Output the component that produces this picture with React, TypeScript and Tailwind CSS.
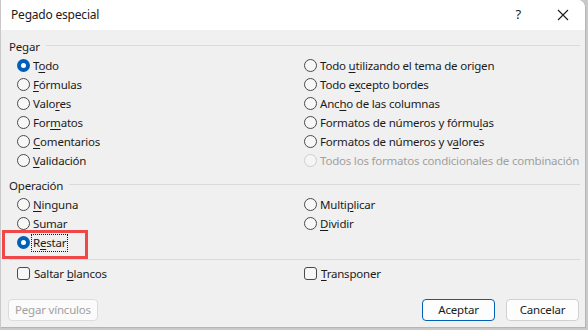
import React from "react"

type Opt = { pre: string; key: string; post: string; checked?: boolean; disabled?: boolean }

function Label({ o }: { o: Opt }) {
  return (
    <span className={o.disabled ? "text-[#a0a0a0]" : "text-[#1b1b1b]"}>
      {o.pre}
      {o.key && <span className="underline underline-offset-[2px]">{o.key}</span>}
      {o.post}
    </span>
  )
}

function Radio({ o, focus }: { o: Opt; focus?: boolean }) {
  return (
    <div className="flex h-[19px] items-center whitespace-nowrap">
      {o.checked ? (
        <span className="ml-[16px] flex h-[13px] w-[13px] shrink-0 items-center justify-center rounded-full bg-[#005fb8]">
          <span className="h-[5px] w-[5px] rounded-full bg-white" />
        </span>
      ) : (
        <span
          className={
            "ml-[16px] h-[13px] w-[13px] shrink-0 rounded-full border " +
            (o.disabled ? "border-[#cfcfcf] bg-[#f5f5f5]" : "border-[#4a4a4a] bg-[#f7f7f7]")
          }
        />
      )}
      <span
        className={
          "ml-[2px] px-[1px] leading-[16px] " +
          (focus ? "outline outline-1 outline-dotted outline-[#1b1b1b]" : "")
        }
      >
        <Label o={o} />
      </span>
    </div>
  )
}

function Check({ o }: { o: Opt }) {
  return (
    <div className="flex h-[19px] items-center whitespace-nowrap">
      <span className="ml-[16px] h-[13px] w-[13px] rounded-[3px] border border-[#4a4a4a] bg-[#f7f7f7]" />
      <span className="ml-[4px]">
        <Label o={o} />
      </span>
    </div>
  )
}

function GroupHeader({ title }: { title: string }) {
  return (
    <div className="flex h-[19px] items-center pr-[5px]">
      <span className="pl-[8px] text-[#1b1b1b]">{title}</span>
      <span className="ml-[6px] mt-[-3px] h-px flex-1 bg-[#dadada]" />
    </div>
  )
}

const pegarLeft: Opt[] = [
  { pre: "T", key: "o", post: "do", checked: true },
  { pre: "", key: "F", post: "órmulas" },
  { pre: "Valo", key: "r", post: "es" },
  { pre: "For", key: "m", post: "atos" },
  { pre: "", key: "C", post: "omentarios" },
  { pre: "", key: "V", post: "alidación" },
]

const pegarRight: Opt[] = [
  { pre: "Todo ", key: "u", post: "tilizando el tema de origen" },
  { pre: "Todo e", key: "x", post: "cepto bordes" },
  { pre: "Anc", key: "h", post: "o de las columnas" },
  { pre: "Formatos de números y fórmu", key: "l", post: "as" },
  { pre: "Formatos de números y v", key: "a", post: "lores" },
  { pre: "Todos los formatos condicionales de combinación", key: "", post: "", disabled: true },
]

export default function App() {
  return (
    <div
      className="h-[330px] w-[588px] bg-[#c9c9c9] text-[11.5px] tracking-[-0.2px]"
      style={{ fontFamily: '"Noto Sans", "Open Sans", sans-serif' }}
    >
      <div className="relative ml-[1px] h-[328px] w-[585px] overflow-hidden rounded-tr-[8px] border-r border-b border-[#b5b5b5] bg-[#f0f0f0]">
        <div className="flex h-[30px] items-center bg-white pl-[10px] pr-[14px]">
          <span className="text-[12px] text-[#1b1b1b]">Pegado especial</span>
          <span className="ml-auto mr-[36px] text-[13px] text-[#1b1b1b]">?</span>
          <svg width="12" height="12" viewBox="0 0 12 12" className="mr-[2px]">
            <path d="M1 1 L11 11 M11 1 L1 11" stroke="#1b1b1b" strokeWidth="1.1" />
          </svg>
        </div>

        <div className="mt-[7px]">
          <GroupHeader title="Pegar" />
          <div className="grid grid-cols-[287px_1fr]">
            <div>
              {pegarLeft.map((o) => (
                <Radio key={o.pre + o.key + o.post} o={o} />
              ))}
            </div>
            <div>
              {pegarRight.map((o) => (
                <Radio key={o.pre + o.key + o.post} o={o} />
              ))}
            </div>
          </div>

          <div className="mt-[6px]">
            <GroupHeader title="Operación" />
          </div>
          <div className="grid grid-cols-[287px_1fr]">
            <div>
              <Radio o={{ pre: "", key: "N", post: "inguna" }} />
              <Radio o={{ pre: "", key: "S", post: "umar" }} />
              <Radio o={{ pre: "R", key: "e", post: "star", checked: true }} focus />
            </div>
            <div>
              <Radio o={{ pre: "Multi", key: "p", post: "licar" }} />
              <Radio o={{ pre: "", key: "D", post: "ividir" }} />
            </div>
          </div>

          <div className="ml-[8px] mr-[5px] mt-[7px] h-px bg-[#dadada]" />

          <div className="mt-[4px] grid grid-cols-[287px_1fr]">
            <Check o={{ pre: "Saltar ", key: "b", post: "lancos" }} />
            <Check o={{ pre: "", key: "T", post: "ransponer" }} />
          </div>

          <div className="mt-[16px] flex items-center pl-[7px] pr-[6px]">
            <button className="h-[22px] w-[90px] rounded-[4px] border border-[#dcdcdc] bg-[#fbfbfb] text-[#a0a0a0]">
              Pegar vínculos
            </button>
            <button className="ml-auto h-[22px] w-[73px] rounded-[4px] border border-[#005fb8] bg-[#fdfdfd] text-[#1b1b1b]">
              Aceptar
            </button>
            <button className="ml-[11px] h-[22px] w-[73px] rounded-[4px] border border-[#d0d0d0] bg-[#fdfdfd] text-[#1b1b1b]">
              Cancelar
            </button>
          </div>
        </div>

        <div className="absolute left-[1px] top-[230px] h-[29px] w-[86px] border-[3px] border-[#f04848]" />
      </div>
    </div>
  )
}
